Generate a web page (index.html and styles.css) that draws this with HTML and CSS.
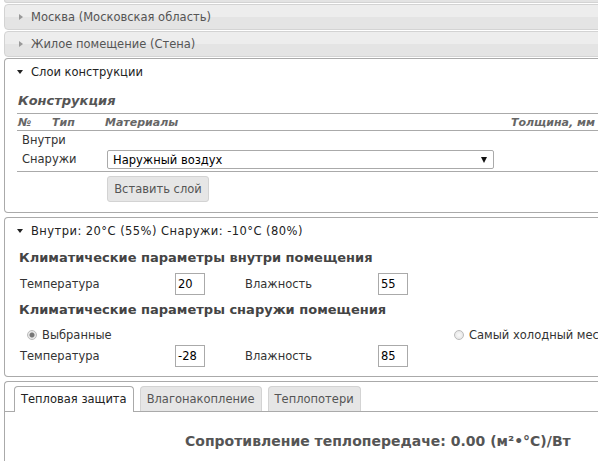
FILE: index.html
```html
<!DOCTYPE html>
<html>
<head>
<meta charset="utf-8">
<link rel="stylesheet" href="styles.css">
</head>
<body>
<div class="page">
  <div class="prev-edge"></div>
  <div class="acc-head"><span class="tri-right"></span>Москва (Московская область)</div>
  <div class="acc-head"><span class="tri-right"></span>Жилое помещение (Стена)</div>

  <div class="acc-head active"><span class="tri-down"></span>Слои конструкции</div>
  <div class="acc-body layers">
    <div class="title">Конструкция</div>
    <div class="trow thead">
      <span class="c-num">№</span><span class="c-type">Тип</span><span class="c-mat">Материалы</span><span class="c-thick">Толщина, мм</span>
    </div>
    <div class="trow plain">
      <span class="c-side">Внутри</span>
    </div>
    <div class="trow outer">
      <span class="c-side">Снаружи</span>
      <div class="select"><span>Наружный воздух</span><span class="sel-arrow"></span></div>
    </div>
    <div class="btn-row"><button class="btn">Вставить слой</button></div>
  </div>

  <div class="acc-head active second"><span class="tri-down"></span><span class="wide">Внутри: 20°C (55%) Снаружи: -10°C (80%)</span></div>
  <div class="acc-body climate">
    <div class="h">Климатические параметры внутри помещения</div>
    <div class="frow first">
      <span class="lbl">Температура</span><span class="inp">20</span>
      <span class="lbl2">Влажность</span><span class="inp">55</span>
    </div>
    <div class="h h2">Климатические параметры снаружи помещения</div>
    <div class="rrow">
      <span class="radio on"></span><span class="rl sel">Выбранные</span>
      <span class="radio off"></span><span class="rl">Самый холодный месяц</span>
    </div>
    <div class="frow">
      <span class="lbl">Температура</span><span class="inp">-28</span>
      <span class="lbl2">Влажность</span><span class="inp">85</span>
    </div>
  </div>

  <div class="tabs">
    <div class="tab-nav">
      <span class="tab active">Тепловая защита</span>
      <span class="tab">Влагонакопление</span>
      <span class="tab">Теплопотери</span>
    </div>
    <div class="tab-body">Сопротивление теплопередаче: 0.00 (м²•°C)/Вт</div>
  </div>
</div>
</body>
</html>
```

FILE: styles.css
```css
html, body {
  margin: 0;
  padding: 0;
  background: #fff;
  overflow: hidden;
}
body {
  font-family: "DejaVu Sans", Verdana, sans-serif;
  font-size: 11.5px;
  color: #333;
}
.page {
  width: 660px;
  padding-left: 4px;
}
.prev-edge {
  height: 2px;
  border: 1px solid #d3d3d3;
  border-top: 0;
  border-radius: 0 0 4px 4px;
  background: #e3e3e3;
}
.acc-head {
  height: 24px;
  line-height: 24px;
  margin-top: 1px;
  padding-left: 26px;
  position: relative;
  border: 1px solid #d3d3d3;
  border-radius: 4px;
  background: linear-gradient(#ededed 0%, #ededed 50%, #e4e4e4 50%, #e4e4e4 100%);
  color: #555;
}
.acc-head.active {
  background: #fff;
  border-color: #aaa;
  border-radius: 4px 4px 0 0;
  border-bottom: 0;
  color: #222;
  height: 26px;
  line-height: 26px;
}
.acc-head.second {
  margin-top: 4px;
}
.wide {
  letter-spacing: 0.45px;
}
.tri-right {
  position: absolute;
  left: 14px;
  top: 9px;
  width: 0;
  height: 0;
  border-top: 3px solid transparent;
  border-bottom: 3px solid transparent;
  border-left: 4px solid #999;
}
.tri-down {
  position: absolute;
  left: 12px;
  top: 11px;
  width: 0;
  height: 0;
  border-left: 3.5px solid transparent;
  border-right: 3.5px solid transparent;
  border-top: 4px solid #222;
}
.acc-body {
  border: 1px solid #aaa;
  border-top: 0;
  border-radius: 0 0 4px 4px;
  padding-left: 12px;
}
.layers {
  padding-bottom: 10px;
}
.title {
  font-weight: bold;
  font-style: italic;
  font-size: 13px;
  color: #555;
  padding: 7px 0 0 1px;
  height: 21px;
  line-height: 18px;
  border-bottom: 1px solid #aaa;
}
.trow {
  display: flex;
  align-items: center;
  border-bottom: 1px solid #aaa;
}
.thead {
  height: 16px;
  font-weight: bold;
  font-style: italic;
  font-size: 11px;
  color: #666;
}
.c-num { width: 34px; padding-left: 1px; }
.c-type { width: 53px; }
.c-mat { width: 406px; }
.plain {
  height: 18px;
  border-bottom: 0;
  align-items: flex-start;
}
.plain .c-side { line-height: 18px; }
.c-side {
  width: 85px;
  padding-left: 5px;
}
.outer {
  height: 22px;
  align-items: flex-start;
}
.outer .c-side { line-height: 21px; }
.select {
  display: flex;
  align-items: center;
  justify-content: space-between;
  padding: 0 6px 0 5px;
  box-sizing: border-box;
  width: 387px;
  height: 19px;
  margin-top: 1px;
  border: 1px solid #aaa;
  border-radius: 2px;
  color: #000;
}
.sel-arrow {
  width: 0;
  height: 0;
  border-left: 3.5px solid transparent;
  border-right: 3.5px solid transparent;
  border-top: 6px solid #111;
}
.btn-row {
  padding: 4px 0 0 90px;
}
.btn {
  font-family: inherit;
  font-size: 11.5px;
  color: #555;
  background: #e6e6e6;
  border: 1px solid #d3d3d3;
  border-radius: 3px;
  height: 26px;
  width: 102px;
  padding: 0;
}
.climate {
  padding-left: 14px;
  padding-bottom: 9px;
}
.h {
  font-weight: bold;
  color: #444;
  font-size: 13px;
  height: 20px;
  line-height: 20px;
  padding-top: 4px;
}
.frow {
  display: flex;
  align-items: center;
  height: 22px;
}
.frow.first {
  margin-top: 5px;
}
.h2 {
  padding-top: 5px;
}
.lbl {
  width: 155px;
  padding-left: 1px;
}
.lbl2 {
  width: 133px;
  padding-left: 40px;
}
.inp {
  width: 26px;
  height: 20px;
  line-height: 20px;
  border: 1px solid #aaa;
  padding-left: 2px;
  color: #000;
}
.rrow {
  display: flex;
  align-items: center;
  height: 20px;
  margin-top: 5px;
  padding-left: 8px;
  white-space: nowrap;
}
.radio {
  flex: none;
  width: 10px;
  height: 10px;
  border-radius: 50%;
  border: 1px solid #bbb;
  background: radial-gradient(circle, #fafafa 0%, #e0e0e0 100%);
  margin-right: 5px;
  box-sizing: border-box;
}
.radio.on {
  background: radial-gradient(circle, #777 0 2px, #e8e8e8 3px);
}
.rl.sel {
  width: 412px;
}
.tabs {
  margin-top: 4px;
  border: 1px solid #aaa;
  border-right: 0;
  border-bottom: 0;
  border-radius: 4px 0 0 0;
  height: 90px;
}
.tab-nav {
  display: flex;
  gap: 6px;
  padding: 4px 0 0 9px;
  border-bottom: 1px solid #aaa;
  height: 25px;
}
.tab {
  height: 24px;
  line-height: 24px;
  padding: 0 6px;
  border: 1px solid #d3d3d3;
  border-bottom: 0;
  border-radius: 4px 4px 0 0;
  background: #e6e6e6;
  color: #555;
}
.tab.active {
  background: #fff;
  border-color: #aaa;
  height: 25px;
  color: #222;
}
.tab-body {
  padding: 21px 0 0 180px;
  font-weight: bold;
  font-size: 14px;
  color: #555;
}
```
